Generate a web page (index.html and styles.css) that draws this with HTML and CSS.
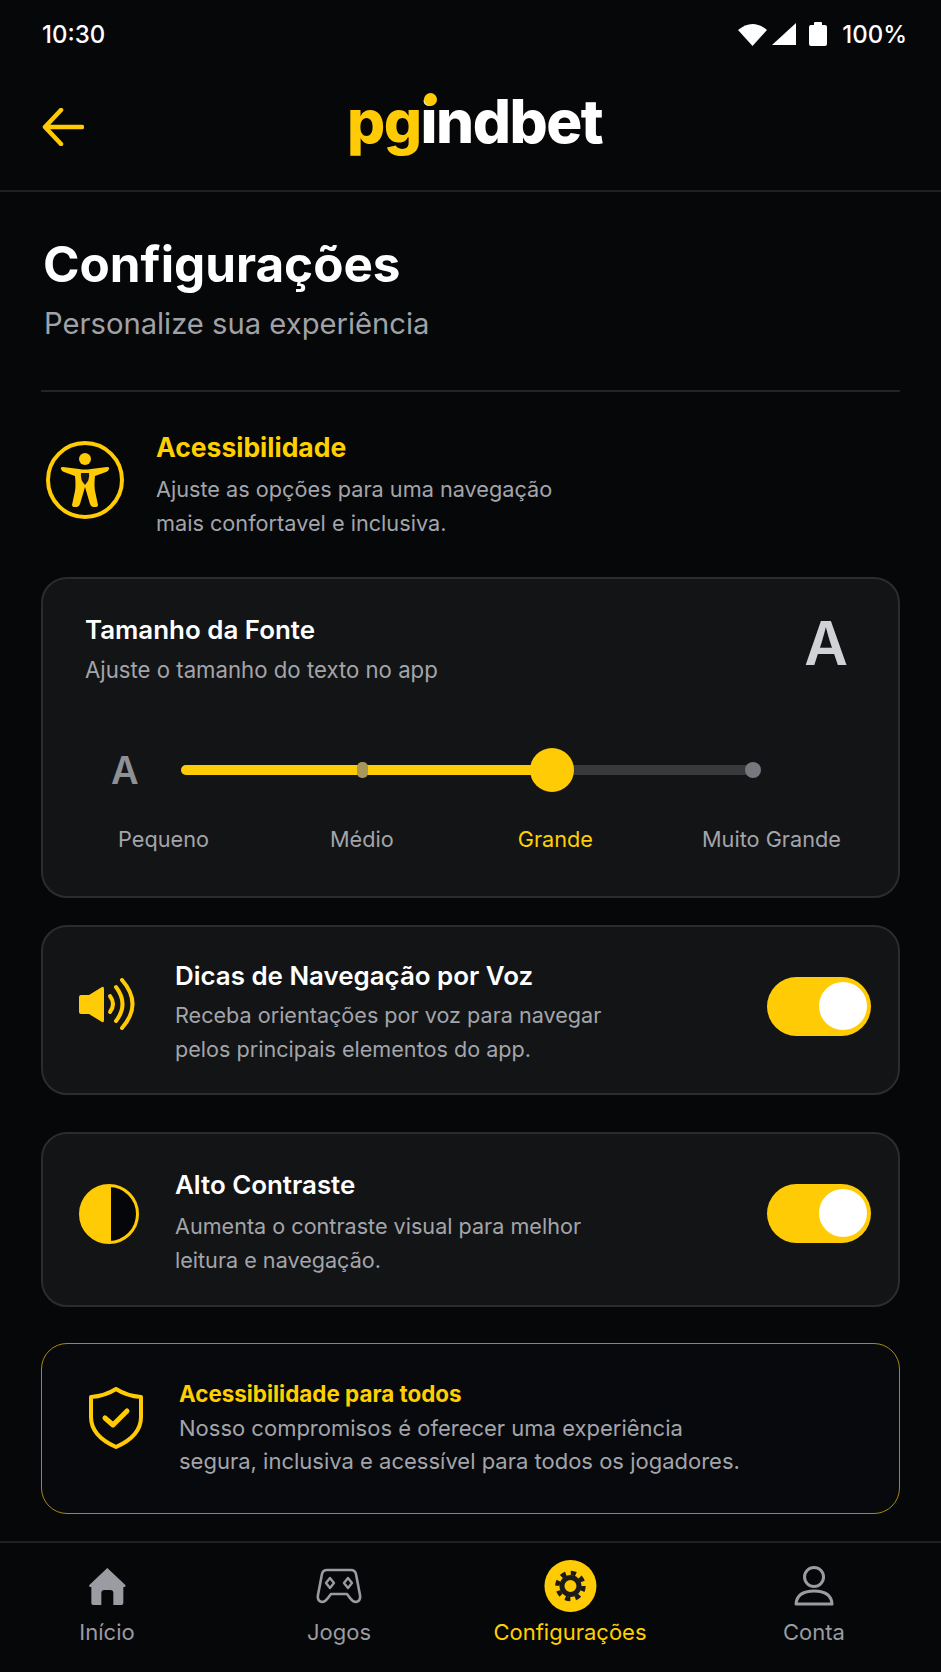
FILE: index.html
```html
<!DOCTYPE html>
<html lang="pt-BR">
<head>
<meta charset="UTF-8" />
<title>Configurações</title>
<link rel="stylesheet" href="styles.css">
</head>
<body>

<div class="status-bar">
  <span>10:30</span>
  <div class="status-icons">
    <svg class="icon-wifi" viewBox="0 0 29 23"><path d="M0 7 Q14.5 -5 29 7 L14.5 23 Z" fill="#fff"/></svg>
    <svg class="icon-signal" viewBox="0 0 24 22"><path d="M24 0 V22 H0 Z" fill="#fff"/></svg>
    <svg class="icon-battery" viewBox="0 0 18 24"><path d="M5 3 V1 Q5 0 6 0 H12 Q13 0 13 1 V3 H16 Q18 3 18 5 V22 Q18 24 16 24 H2 Q0 24 0 22 V5 Q0 3 2 3 Z" fill="#fff"/></svg>
    <span>100%</span>
  </div>
</div>

<header class="top-bar">
  <svg class="icon-back" viewBox="0 0 42 38"><path d="M40 19 H3 M19 2 L3 19 L19 36" fill="none" stroke="#ffcb05" stroke-width="4.5" stroke-linecap="round" stroke-linejoin="round"/></svg>
  <div class="logo"><span class="logo-pg">pg</span><span class="logo-i">i</span>ndbet</div>
</header>

<main class="content">
  <h1>Configurações</h1>
  <p class="subtitle">Personalize sua experiência</p>
  <hr class="divider">

  <section class="section-head">
    <svg class="icon-access" viewBox="0 0 78 78">
      <circle cx="39" cy="39" r="37" fill="none" stroke="#ffcb05" stroke-width="4"/>
      <circle cx="39" cy="18" r="6" fill="#ffcb05"/>
      <path d="M15 28 Q14 26 17 26 L33 28 Q39 29 45 28 L61 26 Q64 26 63 28 Q62 31 60 31 L49 35 Q48 44 49 50 L52 64 Q52 66 50 66 H47 Q45 66 44 63 L39 46 L34 63 Q33 66 31 66 H28 Q26 66 26 64 L29 50 Q30 44 29 35 L18 31 Q16 31 15 28 Z" fill="#ffcb05"/>
      <path d="M35 32 H43 Q44 39 39 44 Q34 39 35 32 Z" fill="#17171a"/>
    </svg>
    <div>
      <h2 class="section-title">Acessibilidade</h2>
      <p class="section-desc">Ajuste as opções para uma navegação<br>mais confortavel e inclusiva.</p>
    </div>
  </section>

  <section class="card font-card">
    <div class="font-head">
      <div>
        <h3 class="card-title">Tamanho da Fonte</h3>
        <p class="font-desc">Ajuste o tamanho do texto no app</p>
      </div>
      <span class="big-a">A</span>
    </div>
    <div class="slider-row">
      <span class="small-a">A</span>
      <div class="track">
        <div class="track-fill"></div>
        <span class="tick"></span>
        <span class="knob"></span>
        <span class="end-dot"></span>
      </div>
    </div>
    <div class="size-labels">
      <span>Pequeno</span>
      <span class="lbl-medio">Médio</span>
      <span class="lbl-grande">Grande</span>
      <span class="lbl-muito">Muito Grande</span>
    </div>
  </section>

  <section class="card row-card voice-card">
    <svg class="icon-voice" viewBox="0 0 58 52">
      <path d="M2 17 H10 L23 9 Q25 8 25 11 V42 Q25 45 23 44 L10 36 H2 Q0 36 0 34 V19 Q0 17 2 17 Z" fill="#ffcb05"/>
      <g fill="none" stroke="#ffcb05" stroke-width="4" stroke-linecap="round">
        <path d="M31 18 Q37 26 31 34"/>
        <path d="M37 9 Q50 26 37 43"/>
        <path d="M43 2 Q64 26 43 50"/>
      </g>
    </svg>
    <div class="row-text">
      <h3 class="card-title">Dicas de Navegação por Voz</h3>
      <p class="row-desc">Receba orientações por voz para navegar<br>pelos principais elementos do app.</p>
    </div>
    <div class="toggle"><span></span></div>
  </section>

  <section class="card row-card contrast-card">
    <svg class="icon-contrast" viewBox="0 0 60 60">
      <circle cx="30" cy="30" r="28.5" fill="#050609" stroke="#ffcb05" stroke-width="3"/>
      <path d="M32 1.57 A28.5 28.5 0 1 0 32 58.43 Z" fill="#ffcb05"/>
    </svg>
    <div class="row-text">
      <h3 class="card-title">Alto Contraste</h3>
      <p class="row-desc contrast-desc">Aumenta o contraste visual para melhor<br>leitura e navegação.</p>
    </div>
    <div class="toggle"><span></span></div>
  </section>

  <section class="note">
    <svg class="icon-shield" viewBox="0 0 54 62">
      <path d="M27 2 Q38 9 52 10 V30 Q52 49 27 60 Q2 49 2 30 V10 Q16 9 27 2 Z" fill="none" stroke="#ffcb05" stroke-width="4" stroke-linejoin="round"/>
      <path d="M16 31 L24 38 L38 24" fill="none" stroke="#ffcb05" stroke-width="5" stroke-linecap="round" stroke-linejoin="round"/>
    </svg>
    <div>
      <h3 class="note-title">Acessibilidade para todos</h3>
      <p class="note-desc">Nosso compromisos é oferecer uma experiência<br>segura, inclusiva e acessível para todos os jogadores.</p>
    </div>
  </section>
</main>

<nav class="bottom-nav">
  <a class="nav-item nav-inicio">
    <svg class="nav-icon" viewBox="0 0 40 40">
      <path d="M20 2 L38 19 Q39 21 36 21 V37 Q36 39 34 39 H26 V27 Q26 24 23 24 H17 Q14 24 14 27 V39 H6 Q4 39 4 37 V21 Q1 21 2 19 Z" fill="#9a9ca2"/>
    </svg>
    <span>Início</span>
  </a>
  <a class="nav-item nav-jogos">
    <svg class="nav-icon nav-icon-wide" viewBox="0 0 46 36">
      <path d="M11 2 H35 Q39 2 40 6 L44 27 Q45 33 40 34 Q37 34 34 30 L31 26 H15 L12 30 Q9 34 6 34 Q1 33 2 27 L6 6 Q7 2 11 2 Z" fill="none" stroke="#9a9ca2" stroke-width="2.6" stroke-linejoin="round"/>
      <path d="M14 10 L18 15 L14 20 L10 15 Z M32 10 L36 15 L32 20 L28 15 Z" fill="none" stroke="#9a9ca2" stroke-width="2.4" stroke-linejoin="round"/>
    </svg>
    <span>Jogos</span>
  </a>
  <a class="nav-item nav-config active">
    <span class="gear-badge">
      <svg viewBox="0 0 32 32">
        <circle cx="16" cy="16" r="8.5" fill="none" stroke="#1b1b17" stroke-width="5"/>
        <circle cx="16" cy="16" r="13" fill="none" stroke="#1b1b17" stroke-width="4.5" stroke-dasharray="5.2 5"/>
      </svg>
    </span>
    <span>Configurações</span>
  </a>
  <a class="nav-item nav-conta">
    <svg class="nav-icon" viewBox="0 0 40 40">
      <circle cx="20" cy="11" r="9.5" fill="none" stroke="#9a9ca2" stroke-width="3"/>
      <path d="M2 38 Q3 25 20 25 Q37 25 38 38 Z" fill="none" stroke="#9a9ca2" stroke-width="3" stroke-linejoin="round"/>
    </svg>
    <span>Conta</span>
  </a>
</nav>

</body>
</html>
```

FILE: styles.css
```css
* { box-sizing: border-box; }
html, body { margin: 0; padding: 0; }
body { width: 941px; height: 1672px; overflow: hidden; background: #060709; color: #fff; font-family: Inter, "Liberation Sans", sans-serif; }
h1, h2, h3, p { margin: 0; }

.status-bar { height: 66px; padding: 2px 34px 0 42px; display: flex; align-items: center; justify-content: space-between; font-size: 24px; font-weight: 500; }
.status-icons { display: flex; align-items: center; }
.icon-wifi { width: 29px; height: 23px; margin-right: 5px; }
.icon-signal { width: 24px; height: 22px; margin-right: 13px; }
.icon-battery { width: 18px; height: 24px; margin-right: 15px; }

.top-bar { height: 126px; border-bottom: 2px solid #1f2023; display: flex; align-items: center; justify-content: center; position: relative; }
.icon-back { position: absolute; left: 42px; top: 42px; width: 42px; height: 38px; }
.logo { font-size: 60px; font-weight: 800; letter-spacing: -1.5px; line-height: 1; margin: -14px 0 0 8px; }
.logo-pg { color: #ffcb05; }
.logo-i { position: relative; }
.logo-i::after { content: ""; position: absolute; left: 3px; top: 8px; width: 13px; height: 13px; border-radius: 50%; background: #ffcb05; }

.content { padding: 0 41px; }
h1 { font-size: 49.4px; font-weight: 700; line-height: 56px; margin-top: 44px; padding-left: 2px; }
.subtitle { font-size: 29.2px; line-height: 36px; color: #a0a2a7; margin-top: 14px; padding-left: 3px; }
.divider { border: none; height: 2px; background: #232427; margin: 48px 0 0; }

.section-head { display: flex; margin-top: 32px; height: 153px; }
.icon-access { width: 78px; height: 78px; margin: 17px 32px 0 5px; flex: none; }
.section-title { font-size: 26.5px; font-weight: 700; line-height: 32px; color: #ffd000; margin-top: 7px; }
.section-desc { font-size: 21.7px; line-height: 34px; color: #a3a5aa; margin-top: 9px; }

.card { background: #131416; border: 2px solid #2b2c2f; border-radius: 26px; }
.card-title { font-size: 25.9px; font-weight: 600; line-height: 30px; }

.font-card { height: 321px; padding: 0 42px; }
.font-head { display: flex; justify-content: space-between; padding-top: 36px; height: 161px; }
.font-desc { font-size: 22.2px; line-height: 30px; color: #a3a5aa; margin-top: 10px; }
.big-a { font-size: 60px; font-weight: 600; color: #d0d2d6; line-height: 70px; margin-right: 8px; margin-top: -7px; }
.slider-row { display: flex; align-items: center; height: 60px; }
.small-a { font-size: 38px; font-weight: 600; color: #8e9096; width: 96px; padding-left: 26px; }
.track { width: 572px; height: 10px; border-radius: 5px; background: #39393c; position: relative; }
.track-fill { width: 372px; height: 10px; border-radius: 5px; background: #ffcb05; }
.tick { position: absolute; left: 176px; top: -3px; width: 11px; height: 16px; border-radius: 5px; background: #a8975a; }
.knob { position: absolute; left: 349px; top: -17px; width: 44px; height: 44px; border-radius: 50%; background: #ffcb05; }
.end-dot { position: absolute; left: 564px; top: -3px; width: 16px; height: 16px; border-radius: 50%; background: #76787e; }
.size-labels { display: flex; font-size: 21.7px; line-height: 30px; color: #a3a5aa; margin-top: 24px; padding-left: 33px; }
.lbl-medio { margin-left: 121px; }
.lbl-grande { margin-left: 124px; color: #ffd000; }
.lbl-muito { margin-left: 109px; }

.row-card { display: flex; align-items: flex-start; position: relative; padding-left: 132px; }
.voice-card { height: 170px; margin-top: 27px; padding-top: 34px; }
.contrast-card { height: 175px; margin-top: 37px; padding-top: 36px; }
.icon-voice { position: absolute; left: 36px; top: 51px; width: 58px; height: 52px; }
.icon-contrast { position: absolute; left: 36px; top: 50px; width: 60px; height: 60px; }
.row-desc { font-size: 21.6px; line-height: 34px; color: #a3a5aa; margin-top: 7px; }
.contrast-desc { margin-top: 9px; }
.toggle { position: absolute; right: 27px; top: 50px; width: 104px; height: 59px; border-radius: 30px; background: #ffcb05; }
.toggle span { position: absolute; right: 4px; top: 5px; width: 48px; height: 48px; border-radius: 50%; background: #fff; }

.note { height: 171px; margin-top: 36px; border: 1.5px solid #a8890f; border-radius: 26px; background: #08090c; display: flex; align-items: flex-start; padding: 36px 0 0 47px; }
.icon-shield { width: 54px; height: 62px; margin: 7px 36px 0 0; flex: none; }
.note-title { font-size: 22.4px; font-weight: 700; line-height: 28px; color: #ffd000; }
.note-desc { font-size: 22px; line-height: 33px; color: #a3a5aa; margin-top: 4px; }

.bottom-nav { position: absolute; left: 0; top: 1541px; width: 941px; height: 131px; border-top: 2px solid #1f2023; }
.nav-item { position: absolute; top: 0; display: flex; flex-direction: column; align-items: center; font-size: 22px; line-height: 30px; color: #9a9ca2; transform: translateX(-50%); }
.nav-inicio { left: 107px; }
.nav-jogos { left: 339px; }
.nav-config { left: 570px; }
.nav-conta { left: 814px; }
.nav-item .nav-icon { width: 40px; height: 40px; margin-top: 23px; margin-bottom: 11px; }
.nav-item .nav-icon-wide { width: 46px; height: 36px; margin-top: 25px; margin-bottom: 13px; }
.active { color: #ffd000; }
.gear-badge { width: 52px; height: 52px; margin-top: 17px; margin-bottom: 5px; border-radius: 50%; background: #ffcb05; display: flex; align-items: center; justify-content: center; }
.gear-badge svg { width: 32px; height: 32px; }
```
